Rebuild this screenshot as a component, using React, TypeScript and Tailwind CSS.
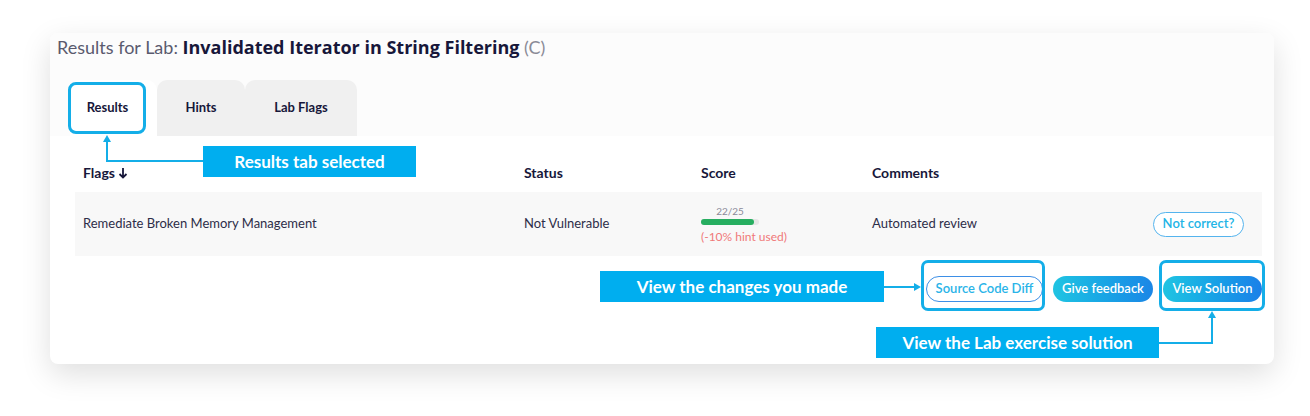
import React from 'react';

const font = { fontFamily: 'Lato, "Noto Sans", sans-serif' };

function ScoreCell() {
  return (
    <div className="flex flex-col items-start">
      <div className="w-[58px] text-center text-[10px] leading-[12px] text-[#8a8a99]">22/25</div>
      <div className="mt-[2px] h-[6px] w-[58px] rounded-full bg-[#e6e6e6]">
        <div className="h-[6px] w-[53px] rounded-full bg-[#27ae60]" />
      </div>
      <div className="mt-[4px] text-[12px] leading-[15px] text-[#f07878]">(-10% hint used)</div>
    </div>
  );
}

export default function App() {
  return (
    <div className="relative h-[416px] w-[1310px] overflow-hidden bg-white" style={font}>
      {/* Card */}
      <div className="ml-[50px] mt-[33px] h-[331px] w-[1224px] rounded-[8px] bg-white shadow-[0_10px_30px_rgba(0,0,0,0.13)]">
        <div className="rounded-t-[8px] bg-[#fcfcfc]">
          <h1 className="pl-[7px] pt-[2px] text-[18px] leading-[24px] text-[#5a5a6e]">
            Results for Lab:{' '}
            <span className="font-bold text-[#17173a]" style={{ fontFamily: '"Open Sans", sans-serif' }}>
              Invalidated Iterator in String Filtering
            </span>{' '}
            <span className="text-[#8a8a96]">(C)</span>
          </h1>

          {/* Tabs */}
          <div className="mt-[21px] flex pl-[20px]">
            <div className="flex h-[56px] w-[87px] items-center justify-center rounded-t-[10px] bg-white pr-[12px] text-[13px] font-bold text-[#17173a]">
              Results
            </div>
            <div className="flex h-[56px] w-[88px] items-center justify-center rounded-t-[10px] bg-[#f0f0f0] text-[13px] font-bold text-[#17173a]">
              Hints
            </div>
            <div className="flex h-[56px] w-[112px] items-center justify-center rounded-t-[10px] bg-[#f0f0f0] text-[13px] font-bold text-[#17173a]">
              Lab Flags
            </div>
          </div>
        </div>

        {/* Table */}
        <div className="pl-[25px] pr-[12px]">
          <div className="grid grid-cols-[441px_177px_171px_1fr] pt-[28px] pb-[10px] pl-[8px] text-[14px] font-bold leading-[18px] text-[#17173a]">
            <div className="flex items-center gap-[3px]">
              Flags
              <svg width="10" height="12" viewBox="0 0 10 12" fill="none" stroke="#17173a" strokeWidth="1.8">
                <path d="M5 1v9.5M1.5 7l3.5 3.5L8.5 7" />
              </svg>
            </div>
            <div>Status</div>
            <div>Score</div>
            <div>Comments</div>
          </div>

          <div className="grid h-[64px] grid-cols-[441px_177px_171px_1fr] items-center bg-[#f8f8f8] pl-[8px] text-[13px] text-[#2d2d48]">
            <div>Remediate Broken Memory Management</div>
            <div>Not Vulnerable</div>
            <ScoreCell />
            <div className="flex items-center justify-between pr-[18px]">
              <span>Automated review</span>
              <button className="h-[25px] w-[91px] rounded-full border border-[#55b4ee] bg-white text-[13px] font-semibold text-[#22b4e6]">
                Not correct?
              </button>
            </div>
          </div>

          <div className="mt-[20px] flex justify-end gap-[10px]">
            <button className="h-[26px] w-[117px] rounded-full border border-[#3d8fe6] bg-white text-[13px] font-semibold text-[#2ab4e8]">
              Source Code Diff
            </button>
            <button className="h-[26px] w-[100px] rounded-full bg-gradient-to-r from-[#20c4e2] to-[#1c86e6] text-[13px] font-semibold text-white">
              Give feedback
            </button>
            <button className="h-[26px] w-[99px] rounded-full bg-gradient-to-r from-[#20c4e2] to-[#1c80e8] text-[13px] font-semibold text-white">
              View Solution
            </button>
          </div>
        </div>
      </div>

      {/* Annotations */}
      <div className="absolute left-[68px] top-[82px] h-[52px] w-[78px] rounded-[8px] border-[3px] border-[#14aee8]" />
      <div className="absolute left-[921px] top-[260px] h-[51px] w-[124px] rounded-[7px] border-[3px] border-[#14aee8]" />
      <div className="absolute left-[1159px] top-[260px] h-[51px] w-[106px] rounded-[7px] border-[3px] border-[#14aee8]" />

      <svg className="absolute left-0 top-0" width="1310" height="416" fill="none">
        <path d="M107 141V161H203" stroke="#14aee8" strokeWidth="2" />
        <path d="M107 135l-4 7h8z" fill="#14aee8" />
        <path d="M884 287H914" stroke="#14aee8" strokeWidth="2" />
        <path d="M921 287l-7-4v8z" fill="#14aee8" />
        <path d="M1159 343H1212V318" stroke="#14aee8" strokeWidth="2" />
        <path d="M1212 311l-4 7h8z" fill="#14aee8" />
      </svg>

      <div className="absolute left-[203px] top-[146px] flex h-[31px] w-[213px] items-center justify-center bg-[#00aeef] text-[17px] font-bold text-white">
        Results tab selected
      </div>
      <div className="absolute left-[600px] top-[271px] flex h-[31px] w-[284px] items-center justify-center bg-[#00aeef] text-[17px] font-bold text-white">
        View the changes you made
      </div>
      <div className="absolute left-[876px] top-[327px] flex h-[31px] w-[283px] items-center justify-center bg-[#00aeef] text-[17px] font-bold text-white">
        View the Lab exercise solution
      </div>
    </div>
  );
}
